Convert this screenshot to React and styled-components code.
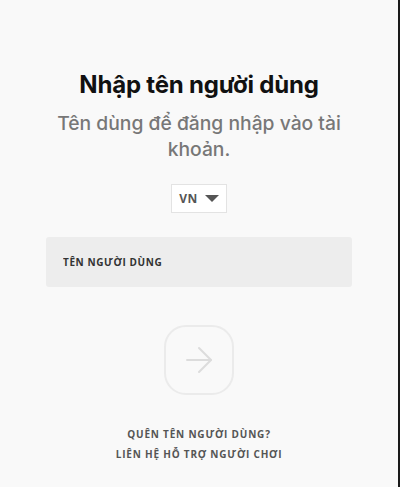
import React, { useState } from "react";
import styled, { createGlobalStyle } from "styled-components";

const GlobalStyle = createGlobalStyle`
  html, body {
    margin: 0;
    padding: 0;
    background: #f9f9f9;
  }
  * {
    box-sizing: border-box;
  }
`;

const StPage = styled.div`
  width: 400px;
  height: 487px;
  background: #f9f9f9;
  border-right: 2px solid #1a1a1a;
  display: flex;
  flex-direction: column;
  align-items: center;
  padding-top: 69px;
  font-family: "Noto Sans", "Open Sans", sans-serif;
`;

const StTitle = styled.h1`
  margin: 0;
  font-family: "Inter", "Noto Sans", sans-serif;
  font-size: 24px;
  font-weight: 700;
  color: #111;
  letter-spacing: -0.2px;
  line-height: 32px;
`;

const StSubtitle = styled.p`
  margin: 9px 0 0;
  width: 300px;
  text-align: center;
  font-family: "Inter", "Noto Sans", sans-serif;
  font-size: 19.3px;
  font-weight: 500;
  color: #777;
  line-height: 26px;
`;

const StLangBtn = styled.button`
  margin-top: 22px;
  height: 29px;
  width: 56px;
  border: 1px solid #e3e3e3;
  background: #fff;
  display: flex;
  align-items: center;
  justify-content: center;
  gap: 7px;
  padding: 0;
  font-family: "Open Sans", sans-serif;
  font-size: 12px;
  font-weight: 700;
  color: #555;
  letter-spacing: 0.5px;
  cursor: pointer;
`;

const StCaret = styled.span`
  width: 0;
  height: 0;
  border-left: 7px solid transparent;
  border-right: 7px solid transparent;
  border-top: 7px solid #555;
`;

const StField = styled.label`
  margin-top: 24px;
  width: 306px;
  height: 50px;
  background: #ededed;
  border-radius: 3px;
  display: flex;
  align-items: center;
  padding: 0 17px;
`;

const StInput = styled.input`
  width: 100%;
  border: none;
  outline: none;
  background: transparent;
  font-family: "Open Sans", sans-serif;
  font-size: 10px;
  font-weight: 700;
  letter-spacing: 0.6px;
  color: #333;
  padding: 0;

  &::placeholder {
    color: #333;
  }
`;

const StSubmit = styled.button`
  margin-top: 38px;
  width: 70px;
  height: 70px;
  border-radius: 22px;
  border: 2px solid #ebebeb;
  background: transparent;
  display: flex;
  align-items: center;
  justify-content: center;
  padding: 0;
`;

const StLinks = styled.div`
  margin-top: 29px;
  display: flex;
  flex-direction: column;
  align-items: center;
`;

const StLink = styled.a`
  font-family: "Open Sans", sans-serif;
  font-size: 10px;
  font-weight: 700;
  letter-spacing: 0.8px;
  line-height: 20px;
  color: #555;
  text-decoration: none;
`;

const App = () => {
  const [name, setName] = useState("");

  return (
    <>
      <GlobalStyle />
      <StPage>
        <StTitle>Nhập tên người dùng</StTitle>
        <StSubtitle>Tên dùng để đăng nhập vào tài khoản.</StSubtitle>
        <StLangBtn>
          VN
          <StCaret />
        </StLangBtn>
        <StField>
          <StInput
            value={name}
            onChange={(e) => setName(e.target.value)}
            placeholder="TÊN NGƯỜI DÙNG"
          />
        </StField>
        <StSubmit disabled={!name}>
          <svg width="28" height="28" viewBox="0 0 28 28" fill="none" stroke="#dcdcdc" strokeWidth="2" strokeLinecap="round" strokeLinejoin="round">
            <path d="M2 14h24" />
            <path d="M14 2l12 12-12 12" />
          </svg>
        </StSubmit>
        <StLinks>
          <StLink href="#">QUÊN TÊN NGƯỜI DÙNG?</StLink>
          <StLink href="#">LIÊN HỆ HỖ TRỢ NGƯỜI CHƠI</StLink>
        </StLinks>
      </StPage>
    </>
  );
};

export default App;
